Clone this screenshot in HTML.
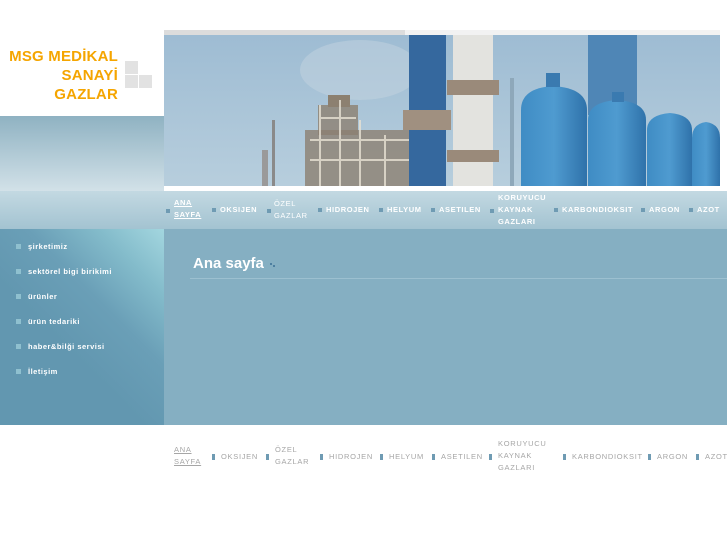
<!DOCTYPE html>
<html><head><meta charset="utf-8"><style>
*{margin:0;padding:0;box-sizing:border-box}
body{width:727px;height:545px;background:#fff;position:relative;overflow:hidden;font-family:"Liberation Sans","DejaVu Sans",sans-serif}
.abs{position:absolute}
.logo{left:0;top:47px;width:118px;text-align:right;color:#f5a500;font-weight:bold;font-size:15px;line-height:19px;white-space:nowrap;letter-spacing:.2px}
.nav{font-size:7.5px;font-weight:bold;color:#fff;letter-spacing:.6px;line-height:12px;white-space:nowrap}
.nav span{position:absolute}
.b{position:absolute;width:4px;height:4px;background:#6f9bb3}
.side{font-size:7.5px;font-weight:bold;color:#fff;white-space:nowrap;letter-spacing:.5px}
.side div{position:absolute;left:28px}
.side i{position:absolute;left:-12px;top:2px;width:5px;height:5px;background:#8fc0cf}
.foot{font-size:7.5px;color:#a6a6a6;letter-spacing:.7px;line-height:12px;white-space:nowrap}
.foot span{position:absolute}
.fb{position:absolute;width:3px;height:6px;background:#6f9bb3}
</style></head><body>
<div class="abs" style="left:0;top:116px;width:164px;height:75px;background:linear-gradient(#8fb2c2,#d2e1e8)"></div>
<div class="abs" style="left:0;top:191px;width:727px;height:38px;background:linear-gradient(#c3d9e2,#a3c3d1)"></div>
<div class="abs" style="left:164px;top:30px;width:241px;height:5px;background:#dcdcdc"></div>
<div class="abs" style="left:405px;top:30px;width:315px;height:5px;background:#f2f2f2"></div>
<div class="abs" style="left:164px;top:186px;width:556px;height:5px;background:#fff"></div>
<svg class="abs" style="left:164px;top:35px" width="556" height="151" viewBox="164 35 556 151">
<defs><linearGradient id="sky" x1="0" y1="0" x2="0" y2="1"><stop offset="0" stop-color="#9ebcd3"/><stop offset="1" stop-color="#b7cedd"/></linearGradient>
<linearGradient id="tk" x1="0" y1="0" x2="1" y2="0"><stop offset="0" stop-color="#3f8cc4"/><stop offset=".5" stop-color="#4f9bd0"/><stop offset="1" stop-color="#2f72aa"/></linearGradient></defs>
<rect x="164" y="35" width="556" height="151" fill="url(#sky)"/>
<ellipse cx="360" cy="70" rx="60" ry="30" fill="#c4d4df" opacity=".5"/>
<rect x="588" y="35" width="49" height="80" fill="#4f86b6"/>
<g fill="#8c8070">
<rect x="305" y="130" width="108" height="56" opacity=".8"/>
<rect x="318" y="105" width="40" height="30" opacity=".8"/>
<rect x="328" y="95" width="22" height="12"/>
</g>
<g stroke="#e8e2d4" stroke-width="2" opacity=".8">
<line x1="310" y1="140" x2="410" y2="140"/><line x1="310" y1="160" x2="410" y2="160"/><line x1="320" y1="118" x2="356" y2="118"/>
<line x1="320" y1="105" x2="320" y2="186"/><line x1="340" y1="100" x2="340" y2="186"/><line x1="360" y1="120" x2="360" y2="186"/><line x1="385" y1="135" x2="385" y2="186"/>
</g>
<rect x="272" y="120" width="3" height="66" fill="#8a8a8a"/>
<rect x="262" y="150" width="6" height="36" fill="#9a9a9a"/>
<rect x="409" y="35" width="37" height="151" fill="#35689e"/>
<rect x="403" y="110" width="48" height="20" fill="#a09080"/>
<rect x="453" y="35" width="40" height="151" fill="#e3e3df"/>
<rect x="447" y="80" width="52" height="15" fill="#9a8a7a"/>
<rect x="447" y="150" width="52" height="12" fill="#9a8a7a"/>
<rect x="510" y="78" width="4" height="108" fill="#8ea8ba"/>
<path d="M521 186 V110 Q521 88 553 86 Q587 88 587 110 V186Z" fill="url(#tk)"/>
<rect x="546" y="73" width="14" height="14" fill="#3a7ab0"/>
<path d="M588 186 V120 Q588 102 617 100 Q646 102 646 120 V186Z" fill="url(#tk)"/>
<rect x="612" y="92" width="12" height="10" fill="#3a7ab0"/>
<path d="M647 186 V130 Q647 115 670 113 Q692 115 692 130 V186Z" fill="url(#tk)"/>
<path d="M692 186 V138 Q692 124 706 122 Q720 124 720 138 V186Z" fill="url(#tk)"/>
</svg>
<div class="abs logo">MSG MEDİKAL<br>SANAYİ<br>GAZLAR</div>
<div class="abs" style="left:125px;top:61px;width:13px;height:13px;background:#e2e2e2"></div>
<div class="abs" style="left:125px;top:75px;width:13px;height:13px;background:#e2e2e2"></div>
<div class="abs" style="left:139px;top:75px;width:13px;height:13px;background:#e2e2e2"></div>
<div class="abs nav" style="left:0;top:0;width:727px">
<i class="b" style="left:166px;top:209px"></i><span style="left:174px;top:197px;text-decoration:underline">ANA<br>SAYFA</span>
<i class="b" style="left:212px;top:208px"></i><span style="left:220px;top:204px">OKSIJEN</span>
<i class="b" style="left:267px;top:209px"></i><span style="left:274px;top:198px;font-weight:normal">ÖZEL<br>GAZLAR</span>
<i class="b" style="left:318px;top:208px"></i><span style="left:326px;top:204px">HIDROJEN</span>
<i class="b" style="left:379px;top:208px"></i><span style="left:387px;top:204px">HELYUM</span>
<i class="b" style="left:431px;top:208px"></i><span style="left:439px;top:204px">ASETILEN</span>
<i class="b" style="left:490px;top:209px"></i><span style="left:498px;top:192px">KORUYUCU<br>KAYNAK<br>GAZLARI</span>
<i class="b" style="left:554px;top:208px"></i><span style="left:562px;top:204px">KARBONDIOKSIT</span>
<i class="b" style="left:641px;top:208px"></i><span style="left:649px;top:204px">ARGON</span>
<i class="b" style="left:689px;top:208px"></i><span style="left:697px;top:204px">AZOT</span>
</div>
<div class="abs" style="left:0;top:229px;width:164px;height:196px;background:linear-gradient(225deg,#a3d6df 0%,#84bccb 18%,#6a9fb7 38%,#6297b0 60%,#6297b0 100%)"></div>
<div class="abs" style="left:164px;top:229px;width:563px;height:196px;background:#85afc2"></div>
<div class="abs side" style="left:0;top:0">
<div style="top:242px"><i></i>şirketimiz</div>
<div style="top:267px"><i></i>sektörel bigi birikimi</div>
<div style="top:292px"><i></i>ürünler</div>
<div style="top:317px"><i></i>ürün tedariki</div>
<div style="top:342px"><i></i>haber&amp;bilği servisi</div>
<div style="top:367px"><i></i>İletişim</div>
</div>
<div class="abs" style="left:193px;top:255px;color:#fff;font-size:15px;font-weight:bold">Ana sayfa</div>
<div class="abs" style="left:270px;top:263px;width:2px;height:2px;background:#4d7fa0"></div>
<div class="abs" style="left:273px;top:265px;width:2px;height:2px;background:#4d7fa0"></div>
<div class="abs" style="left:190px;top:278px;width:538px;height:1px;background:#9cc0d0"></div>
<div class="abs foot" style="left:0;top:0;width:727px">
<span style="left:174px;top:444px;text-decoration:underline">ANA<br>SAYFA</span>
<i class="fb" style="left:212px;top:454px"></i><span style="left:221px;top:451px">OKSIJEN</span>
<i class="fb" style="left:266px;top:454px"></i><span style="left:275px;top:444px">ÖZEL<br>GAZLAR</span>
<i class="fb" style="left:320px;top:454px"></i><span style="left:329px;top:451px">HIDROJEN</span>
<i class="fb" style="left:380px;top:454px"></i><span style="left:389px;top:451px">HELYUM</span>
<i class="fb" style="left:432px;top:454px"></i><span style="left:441px;top:451px">ASETILEN</span>
<i class="fb" style="left:489px;top:454px"></i><span style="left:498px;top:438px">KORUYUCU<br>KAYNAK<br>GAZLARI</span>
<i class="fb" style="left:563px;top:454px"></i><span style="left:572px;top:451px">KARBONDIOKSIT</span>
<i class="fb" style="left:648px;top:454px"></i><span style="left:657px;top:451px">ARGON</span>
<i class="fb" style="left:696px;top:454px"></i><span style="left:705px;top:451px">AZOT</span>
</div>
</body></html>
